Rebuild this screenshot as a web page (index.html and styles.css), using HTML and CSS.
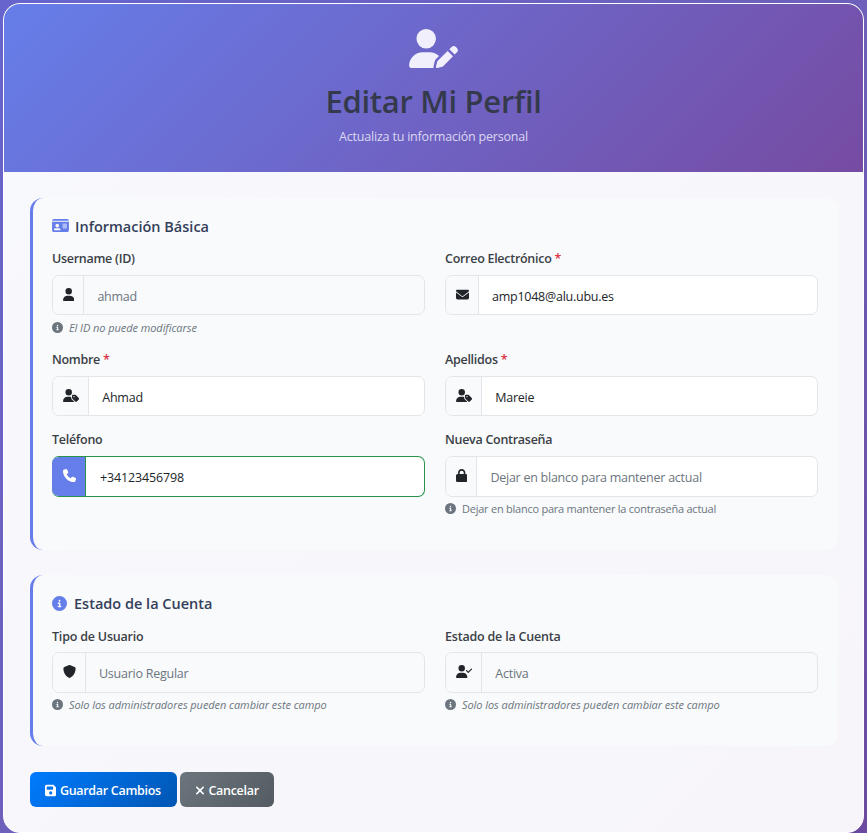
FILE: index.html
```html
<!DOCTYPE html>
<html lang="es">
<head>
<meta charset="utf-8">
<title>Editar Mi Perfil</title>
<link rel="stylesheet" href="styles.css">
</head>
<body>
<svg class="sprite" aria-hidden="true">
  <symbol id="user" viewBox="0 0 448 512"><path d="M224 256A128 128 0 1 0 224 0a128 128 0 1 0 0 256zm-45.700 48C79.800 304 0 383.800 0 482.300C0 498.700 13.300 512 29.700 512H418.300c16.400 0 29.700-13.300 29.700-29.700C448 383.800 368.200 304 269.700 304H178.300z"/></symbol>
  <symbol id="user-pen" viewBox="0 0 640 512"><path d="M224 256A128 128 0 1 0 224 0a128 128 0 1 0 0 256zm-45.700 48C79.800 304 0 383.800 0 482.300C0 498.700 13.300 512 29.700 512H322.800c-3.100-8.800-3.700-18.400-1.400-27.800l15-60.100c2.800-11.300 8.600-21.500 16.800-29.700l40.300-40.300c-32.100-31-75.700-50.100-123.900-50.100H178.300zm435.500-68.300c-15.600-15.600-40.900-15.600-56.600 0l-29.400 29.400 71 71 29.400-29.400c15.600-15.600 15.600-40.900 0-56.600l-14.400-14.400zM375.900 417c-4.100 4.100-7 9.200-8.400 14.900l-15 60.100c-1.400 5.500 .2 11.200 4.200 15.200s9.700 5.600 15.200 4.200l60.100-15c5.600-1.400 10.800-4.300 14.900-8.400L576.100 358.700l-71-71L375.900 417z"/></symbol>
  <symbol id="user-tag" viewBox="0 0 640 512"><path d="M224 256A128 128 0 1 0 224 0a128 128 0 1 0 0 256zm-45.700 48C79.800 304 0 383.800 0 482.300C0 498.700 13.300 512 29.700 512h388.600c10 0 18.800-4.900 24.200-12.500l-99.200-99.200c-14.900-14.900-23.300-35.100-23.300-56.100v-33c-15.900-4.700-32.800-7.200-50.300-7.200H178.300zM384 224c-17.700 0-32 14.300-32 32v82.700c0 17 6.700 33.300 18.700 45.300L478.100 491.300c18.700 18.700 49.100 18.700 67.900 0l73.400-73.400c18.700-18.700 18.700-49.100 0-67.900L512 242.700c-12-12-28.300-18.700-45.300-18.700H384zm24 80a24 24 0 1 1 48 0 24 24 0 1 1-48 0z"/></symbol>
  <symbol id="user-check" viewBox="0 0 640 512"><path d="M96 128a128 128 0 1 1 256 0A128 128 0 1 1 96 128zM0 482.300C0 383.800 79.800 304 178.300 304h91.400C368.200 304 448 383.800 448 482.300c0 16.400-13.300 29.700-29.700 29.700H29.700C13.300 512 0 498.700 0 482.300zM625 177L497 305c-9.400 9.400-24.600 9.400-33.900 0l-64-64c-9.400-9.400-9.400-24.600 0-33.900s24.600-9.400 33.900 0l47 47L591 143c9.400-9.400 24.600-9.400 33.900 0s9.400 24.600 0 33.900z"/></symbol>
  <symbol id="id-card" viewBox="0 0 576 512"><path d="M0 96h576c0-35.300-28.700-64-64-64H64C28.700 32 0 60.700 0 96zm0 32V416c0 35.300 28.700 64 64 64H512c35.300 0 64-28.700 64-64V128H0zM64 405.300c0-29.500 23.900-53.300 53.300-53.300H234.700c29.500 0 53.300 23.900 53.300 53.300c0 5.900-4.800 10.700-10.700 10.700H74.700c-5.900 0-10.700-4.800-10.700-10.700zM176 192a64 64 0 1 1 0 128 64 64 0 1 1 0-128zm176 16c0-8.800 7.200-16 16-16H496c8.800 0 16 7.200 16 16s-7.200 16-16 16H368c-8.800 0-16-7.200-16-16zm0 64c0-8.800 7.200-16 16-16H496c8.800 0 16 7.200 16 16s-7.200 16-16 16H368c-8.800 0-16-7.200-16-16zm0 64c0-8.800 7.200-16 16-16H496c8.800 0 16 7.200 16 16s-7.200 16-16 16H368c-8.800 0-16-7.200-16-16z"/></symbol>
  <symbol id="envelope" viewBox="0 0 512 512"><path d="M48 64C21.500 64 0 85.500 0 112c0 15.100 7.100 29.300 19.200 38.400L236.800 313.600c11.400 8.500 27 8.500 38.400 0L492.800 150.400c12.100-9.100 19.200-23.300 19.200-38.400c0-26.500-21.500-48-48-48H48zM0 176V384c0 35.300 28.700 64 64 64H448c35.300 0 64-28.700 64-64V176L294.400 339.200c-22.800 17.100-54 17.100-76.800 0L0 176z"/></symbol>
  <symbol id="phone" viewBox="0 0 512 512"><path d="M164.900 24.600c-7.700-18.600-28-28.500-47.400-23.200l-88 24C12.100 30.200 0 46 0 64C0 311.400 200.600 512 448 512c18 0 33.800-12.100 38.600-29.500l24-88c5.300-19.400-4.600-39.700-23.200-47.400l-96-40c-16.300-6.800-35.200-2.100-46.300 11.600L304.700 368C234.300 334.700 177.300 277.700 144 207.300L193.300 167c13.700-11.200 18.400-30 11.600-46.300l-40-96z"/></symbol>
  <symbol id="lock" viewBox="0 0 448 512"><path d="M144 144v48H304V144c0-44.200-35.800-80-80-80s-80 35.800-80 80zM80 192V144C80 64.500 144.500 0 224 0s144 64.500 144 144v48h16c35.300 0 64 28.700 64 64V448c0 35.300-28.700 64-64 64H64c-35.300 0-64-28.700-64-64V256c0-35.300 28.700-64 64-64H80z"/></symbol>
  <symbol id="shield" viewBox="0 0 512 512"><path d="M256 0c4.600 0 9.200 1 13.400 2.900L457.700 82.800c22 9.300 38.400 31 38.300 57.200c-.5 99.200-41.300 280.700-213.600 363.200c-16.700 8-36.100 8-52.800 0C57.300 420.700 16.500 239.200 16 140c-.1-26.200 16.300-47.900 38.300-57.200L242.700 2.900C246.800 1 251.400 0 256 0z"/></symbol>
  <symbol id="info" viewBox="0 0 512 512"><path d="M256 512A256 256 0 1 0 256 0a256 256 0 1 0 0 512zM216 336h24V272H216c-13.300 0-24-10.700-24-24s10.700-24 24-24h48c13.300 0 24 10.700 24 24v88h8c13.300 0 24 10.700 24 24s-10.700 24-24 24H216c-13.300 0-24-10.700-24-24s10.700-24 24-24zm40-208a32 32 0 1 1 0 64 32 32 0 1 1 0-64z"/></symbol>
  <symbol id="save" viewBox="0 0 448 512"><path d="M64 32C28.700 32 0 60.700 0 96V416c0 35.300 28.700 64 64 64H384c35.300 0 64-28.700 64-64V173.300c0-17-6.700-33.300-18.700-45.300L352 50.700C340 38.700 323.700 32 306.700 32H64zm0 96c0-17.700 14.300-32 32-32H288c17.700 0 32 14.300 32 32v64c0 17.700-14.300 32-32 32H96c-17.700 0-32-14.300-32-32V128zM224 288a64 64 0 1 1 0 128 64 64 0 1 1 0-128z"/></symbol>
  <symbol id="xmark" viewBox="0 0 384 512"><path d="M342.600 150.600c12.500-12.500 12.500-32.800 0-45.300s-32.800-12.500-45.300 0L192 210.700 86.600 105.400c-12.500-12.500-32.800-12.500-45.300 0s-12.500 32.800 0 45.300L146.700 256 41.400 361.400c-12.500 12.500-12.500 32.800 0 45.300s32.800 12.500 45.300 0L192 301.300 297.400 406.600c12.500 12.500 32.800 12.500 45.300 0s12.500-32.800 0-45.300L237.300 256 342.600 150.600z"/></symbol>
</svg>

<main class="card">
  <header class="card-header">
    <svg class="header-icon"><use href="#user-pen"/></svg>
    <h1>Editar Mi Perfil</h1>
    <p>Actualiza tu información personal</p>
  </header>
  <div class="card-body">
    <section class="panel basic">
      <h2><svg class="w-idcard"><use href="#id-card"/></svg><span>Información Básica</span></h2>
      <div class="grid">
        <div class="field tall">
          <div class="label">Username (ID)</div>
          <div class="group readonly"><div class="addon"><svg class="w-narrow"><use href="#user"/></svg></div><div class="control">ahmad</div></div>
          <div class="help italic"><svg><use href="#info"/></svg><span>El ID no puede modificarse</span></div>
        </div>
        <div class="field tall">
          <div class="label">Correo Electrónico <b>*</b></div>
          <div class="group"><div class="addon"><svg class="w-square"><use href="#envelope"/></svg></div><div class="control">amp1048@alu.ubu.es</div></div>
        </div>
        <div class="field">
          <div class="label">Nombre <b>*</b></div>
          <div class="group"><div class="addon"><svg class="w-wide"><use href="#user-tag"/></svg></div><div class="control">Ahmad</div></div>
        </div>
        <div class="field">
          <div class="label">Apellidos <b>*</b></div>
          <div class="group"><div class="addon"><svg class="w-wide"><use href="#user-tag"/></svg></div><div class="control">Mareie</div></div>
        </div>
        <div class="field last">
          <div class="label">Teléfono</div>
          <div class="group valid"><div class="addon"><svg class="w-square"><use href="#phone"/></svg></div><div class="control">+34123456798</div></div>
        </div>
        <div class="field last">
          <div class="label">Nueva Contraseña</div>
          <div class="group placeholder"><div class="addon"><svg class="w-narrow"><use href="#lock"/></svg></div><div class="control">Dejar en blanco para mantener actual</div></div>
          <div class="help"><svg><use href="#info"/></svg><span>Dejar en blanco para mantener la contraseña actual</span></div>
        </div>
      </div>
    </section>
    <section class="panel status">
      <h2><svg class="w-info"><use href="#info"/></svg><span>Estado de la Cuenta</span></h2>
      <div class="grid">
        <div class="field last">
          <div class="label">Tipo de Usuario</div>
          <div class="group readonly"><div class="addon"><svg class="w-square"><use href="#shield"/></svg></div><div class="control">Usuario Regular</div></div>
          <div class="help italic"><svg><use href="#info"/></svg><span>Solo los administradores pueden cambiar este campo</span></div>
        </div>
        <div class="field last">
          <div class="label">Estado de la Cuenta</div>
          <div class="group readonly"><div class="addon"><svg class="w-wide"><use href="#user-check"/></svg></div><div class="control">Activa</div></div>
          <div class="help italic"><svg><use href="#info"/></svg><span>Solo los administradores pueden cambiar este campo</span></div>
        </div>
      </div>
    </section>
    <div class="actions">
      <button class="btn primary"><svg class="w-narrow"><use href="#save"/></svg><span>Guardar Cambios</span></button>
      <button class="btn secondary"><svg class="w-x"><use href="#xmark"/></svg><span>Cancelar</span></button>
    </div>
  </div>
</main>
</body>
</html>
```
FILE: styles.css
```css
* { box-sizing: border-box; }

body {
  margin: 0;
  height: 833px;
  padding: 3px 3px 0;
  overflow: hidden;
  background: linear-gradient(135deg, #6764cd 0%, #6d60bb 50%, #6b4a9f 100%);
  font-family: "Open Sans", "Noto Sans", sans-serif;
  font-size: 12.5px;
  color: #212529;
}

.sprite { display: none; }
svg { display: block; flex: none; fill: currentColor; }

.card {
  height: 830px;
  border: 1px solid #fff;
  border-radius: 17px;
  overflow: hidden;
  background: linear-gradient(135deg, #f8f9fd, #f7f5fa);
}

.card-header {
  height: 168px;
  padding-top: 25px;
  display: flex;
  flex-direction: column;
  align-items: center;
  background: linear-gradient(135deg, #667eea 0%, #764ba2 100%);
}

.header-icon { width: 49px; height: 39px; color: #f0effb; }

h1, h2, p { margin: 0; white-space: nowrap; }
h1 { margin-top: 12px; font-size: 31px; font-weight: 570; line-height: 42px; letter-spacing: -0.3px; color: #343a4c; }
.card-header p { margin-top: 5px; line-height: 20px; letter-spacing: -0.2px; color: #dcd8f1; }

.card-body { padding: 26px 25px 0 26px; }

.panel {
  padding: 18px 20px 0 19px;
  border-left: 3px solid #667eea;
  border-radius: 13px;
  background: #f8fafc;
}
.basic { height: 352px; margin-bottom: 25px; }
.status { height: 171px; margin-bottom: 26px; }

h2 {
  display: flex;
  align-items: center;
  height: 22px;
  margin-bottom: 12px;
  font-size: 14.5px;
  font-weight: 570;
  line-height: 22px;
  color: #34405a;
}
h2 svg { color: #667eea; height: 15px; }
.w-idcard { width: 17px; margin: -3px 6px 0 0; }
.w-info { width: 15px; margin: -1px 7px 0 0; }

.grid { display: grid; grid-template-columns: 1fr 1fr; column-gap: 20px; }
.field { height: 80px; }
.field.tall { height: 101px; }
.field.last { height: 90px; }

.label { height: 25px; line-height: 18px; font-weight: 600; letter-spacing: -0.28px; color: #3b4046; white-space: nowrap; }
.label b { color: #dc3545; font-weight: 600; }
.status .label { padding-top: 1px; letter-spacing: -0.2px; }

.group { display: flex; height: 40px; border: 1px solid #e2e6ea; border-radius: 7px; background: #fff; overflow: hidden; }
.last .group { height: 41px; }
.addon { flex: none; padding: 12px 9px 0 10px; border-right: 1px solid #e2e6ea; background: #f8fafc; }
.addon svg { height: 13px; }
.w-narrow { width: 11.400px; }
.w-square { width: 13px; }
.w-wide { width: 16.300px; }
.control { padding: 2px 0 0 13px; line-height: 38px; letter-spacing: -0.25px; white-space: nowrap; }
.readonly { background: #f8fafc; }
.readonly .control, .placeholder .control { color: #6c757d; }
.valid { border-color: #28944a; border-left: 0; }
.valid .addon { margin: -1px 0; padding: 13px 9px 0 11px; background: #667eea; border-right-color: #28944a; color: #fff; }
.valid .control { padding-left: 14px; letter-spacing: -0.15px; }

.help { display: flex; align-items: center; height: 22px; padding-top: 3px; font-size: 11px; letter-spacing: -0.24px; color: #6c757d; white-space: nowrap; }
.last .help { padding-top: 1px; }
.help svg { width: 11px; height: 11px; margin-right: 6px; }
.italic { font-style: italic; letter-spacing: -0.07px; }

.actions { display: flex; gap: 3px; }
.btn {
  display: flex;
  align-items: center;
  height: 35px;
  padding: 1px 0 0 15px;
  border: 0;
  border-radius: 6px;
  font: 600 12.5px "Open Sans", "Noto Sans", sans-serif;
  letter-spacing: -0.3px;
  color: #fff;
  white-space: nowrap;
}
.btn svg { height: 13px; margin-right: 3.500px; }
.w-x { width: 10px; }
.primary { width: 147px; background: linear-gradient(135deg, #007bff, #0056b3); }
.secondary { width: 94px; background: linear-gradient(135deg, #6c757d, #545b62); }
```
